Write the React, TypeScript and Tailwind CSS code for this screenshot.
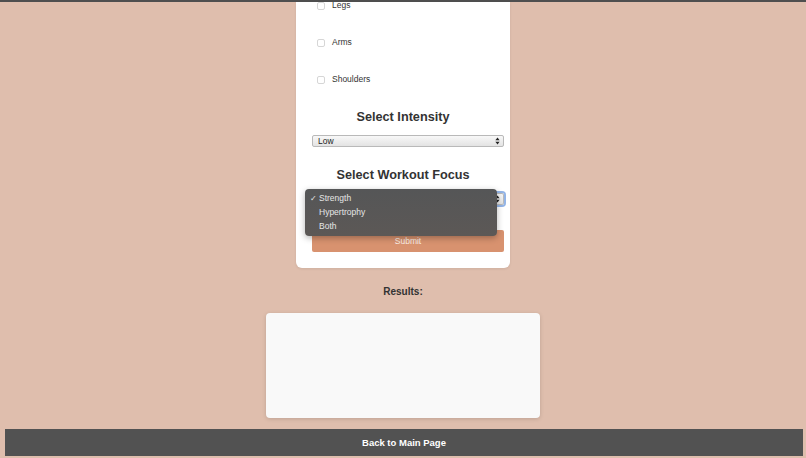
import React from "react";

const muscles = ["Legs", "Arms", "Shoulders"];
const focusOptions = ["Strength", "Hypertrophy", "Both"];

function SelectArrows() {
  return (
    <svg width="5" height="8" viewBox="0 0 5 8" className="shrink-0">
      <path d="M2.5 0.5 L4.6 3.2 L0.4 3.2 Z" fill="#222" />
      <path d="M2.5 7.5 L4.6 4.8 L0.4 4.8 Z" fill="#222" />
    </svg>
  );
}

function FakeSelect({ value, focused, hideValue }: { value: string; focused?: boolean; hideValue?: boolean }) {
  return (
    <div
      className={`flex h-[12px] items-center justify-between rounded-[2px] border border-[#b9b9b9] bg-gradient-to-b from-[#f8f8f8] to-[#e3e3e3] pl-[5px] pr-[3px] text-[8.5px] leading-none text-[#222] ${
        focused ? "ring-2 ring-[#93b4e6]" : ""
      }`}
    >
      <span className={hideValue ? "invisible" : ""}>{value}</span>
      <SelectArrows />
    </div>
  );
}

export default function App() {
  return (
    <div className="min-h-[458px] bg-[#dfbead] font-['Liberation_Sans',Arial,sans-serif] text-[#333]">
      {/* header edge */}
      <div className="h-[2px] bg-[#4f4f4f]" />

      {/* workout form card */}
      <div className="mx-auto w-[214px] overflow-hidden rounded-b-[6px] bg-white shadow-[0_1px_3px_rgba(0,0,0,0.08)]">
        <div className="mt-[-15px] pb-[16px] pl-[16px] pr-[6px]">
          {muscles.map((m) => (
            <label key={m} className="flex h-[37px] items-center gap-[7px] pl-[5px] text-[8.5px]">
              <span className="h-[8px] w-[8px] rounded-[2px] border border-[#d6d6d6] bg-white" />
              <span>{m}</span>
            </label>
          ))}

          <h2 className="ml-[-10px] mt-[12px] h-[15px] text-center text-[12.7px] font-bold leading-[15px]">
            Select Intensity
          </h2>
          <div className="mt-[10px]">
            <FakeSelect value="Low" />
          </div>

          <h2 className="ml-[-10px] mt-[21px] h-[15px] text-center text-[12.7px] font-bold leading-[15px]">
            Select Workout Focus
          </h2>
          <div className="relative mt-[10px]">
            <FakeSelect value="Strength" focused hideValue />
            {/* open options list */}
            <div className="absolute left-[-7px] top-[-4px] z-10 flex h-[47px] w-[192px] flex-col justify-center gap-[3px] rounded-[4px] bg-gradient-to-b from-[#555657] to-[#5c5856] text-[8.5px] leading-[11px] text-[#e6e6e6] shadow-[0_2px_6px_rgba(0,0,0,0.3)]">
              {focusOptions.map((o, i) => (
                <div key={o} className="flex items-center">
                  <span className="w-[14px] pl-[5px] text-[8px]">{i === 0 ? "✓" : ""}</span>
                  <span>{o}</span>
                </div>
              ))}
            </div>
          </div>

          <button className="mt-[25px] flex h-[22px] w-full items-center justify-center rounded-[2px] bg-[#d8926f] text-[8.5px] text-[#fbeee6]">
            Submit
          </button>
        </div>
      </div>

      <h3 className="mt-[18px] h-[12px] text-center text-[10px] font-bold leading-[12px]">Results:</h3>
      <div className="mx-auto mt-[15px] h-[105px] w-[274px] rounded-[4px] bg-[#f9f9f9] shadow-[0_1px_4px_rgba(0,0,0,0.15)]" />

      <button className="ml-[5px] mt-[11px] flex h-[27px] w-[798px] items-center justify-center bg-[#525252] pt-[1px] text-[9.5px] font-bold text-white">
        Back to Main Page
      </button>
    </div>
  );
}
